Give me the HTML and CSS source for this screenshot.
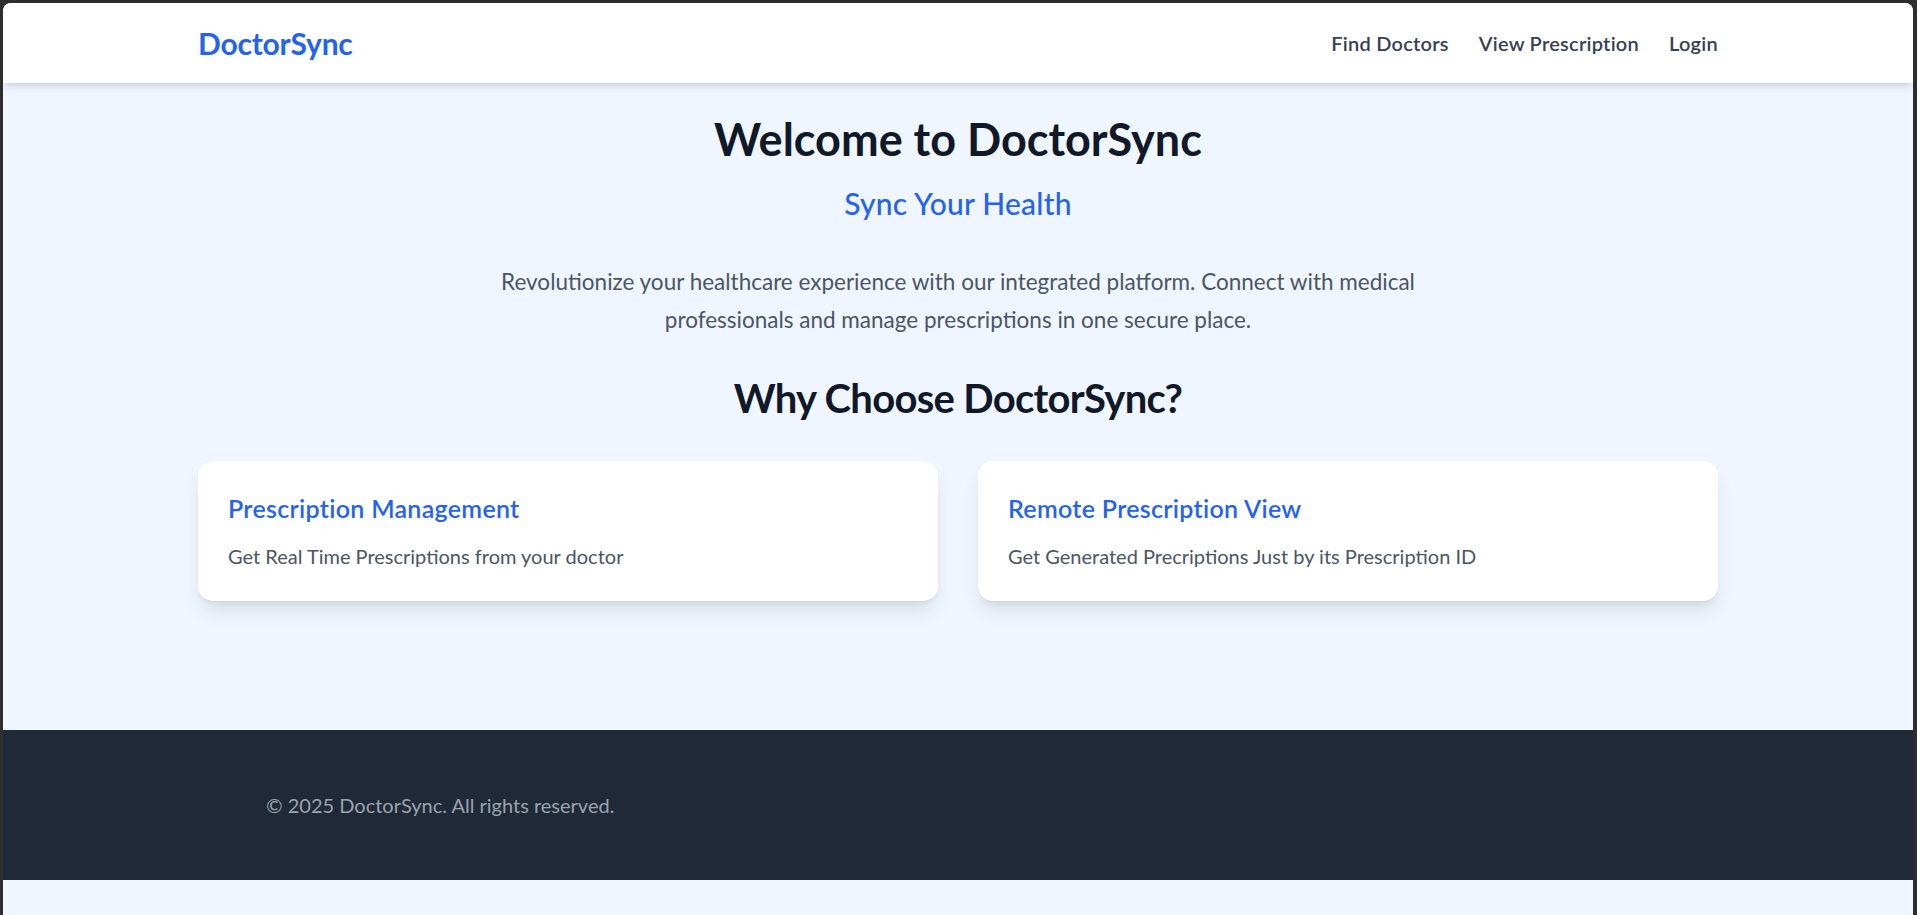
FILE: index.html
```html
<!DOCTYPE html>
<html lang="en">
<head>
<meta charset="utf-8">
<title>DoctorSync</title>
<link rel="stylesheet" href="styles.css">
</head>
<body>
<div class="window">
  <header class="topbar">
    <div class="container topbar-inner">
      <a class="logo" href="#">DoctorSync</a>
      <nav class="nav">
        <a href="#">Find Doctors</a>
        <a href="#">View Prescription</a>
        <a href="#">Login</a>
      </nav>
    </div>
  </header>

  <main class="hero">
    <div class="container">
      <h1 class="hero-title">Welcome to DoctorSync</h1>
      <h2 class="hero-sub">Sync Your Health</h2>
      <p class="hero-text">Revolutionize your healthcare experience with our integrated platform. Connect with medical professionals and manage prescriptions in one secure place.</p>

      <h2 class="section-title">Why Choose DoctorSync?</h2>
      <div class="features">
        <div class="card">
          <h3 class="card-title">Prescription Management</h3>
          <p class="card-text">Get Real Time Prescriptions from your doctor</p>
        </div>
        <div class="card">
          <h3 class="card-title">Remote Prescription View</h3>
          <p class="card-text">Get Generated Precriptions Just by its Prescription ID</p>
        </div>
      </div>
    </div>
  </main>

  <footer class="footer">
    <div class="footer-inner">
      <p class="footer-text">© 2025 DoctorSync. All rights reserved.</p>
    </div>
  </footer>
</div>
</body>
</html>
```

FILE: styles.css
```css
* { box-sizing: border-box; }

html, body {
  margin: 0;
  padding: 0;
}

body {
  background: #2e2e2e;
  font-family: "Lato", "Open Sans", sans-serif;
  min-height: 100vh;
}

.window {
  margin: 3px 4px 0 3px;
  background: #eff6ff;
  border-radius: 8px 8px 0 0;
  overflow: hidden;
  min-height: calc(100vh - 3px);
}

.container {
  max-width: 1520px;
  margin: 0 auto;
}

/* Header */
.topbar {
  background: #ffffff;
  height: 80px;
  box-shadow: 0 5px 7.5px -1.25px rgba(0,0,0,0.1), 0 2.5px 5px -2.5px rgba(0,0,0,0.1);
  position: relative;
  z-index: 1;
}

.topbar-inner {
  height: 80px;
  display: flex;
  align-items: center;
  justify-content: space-between;
}

.logo {
  color: #2563eb;
  font-weight: 700;
  font-size: 30px;
  text-decoration: none;
  letter-spacing: -0.2px;
}

.nav {
  display: flex;
  gap: 30px;
}

.nav a {
  color: #374151;
  font-size: 20px;
  font-weight: 600;
  letter-spacing: 0.25px;
  text-decoration: none;
}

/* Hero */
.hero {
  padding: 31px 0 129px;
  text-align: center;
}

.hero-title {
  margin: 0;
  font-size: 45px;
  line-height: 50px;
  font-weight: 700;
  color: #111827;
}

.hero-sub {
  margin: 19px 0 0;
  font-size: 30px;
  line-height: 40px;
  font-weight: 500;
  letter-spacing: 0.2px;
  color: #2563eb;
}

.hero-text {
  margin: 40px auto 0;
  max-width: 960px;
  font-size: 22.5px;
  line-height: 38px;
  color: #4b5563;
}

.section-title {
  margin: 37px 0 0;
  font-size: 40px;
  line-height: 45px;
  font-weight: 700;
  letter-spacing: -0.7px;
  color: #111827;
}

.features {
  margin-top: 40px;
  display: grid;
  grid-template-columns: 1fr 1fr;
  gap: 40px;
  text-align: left;
}

.card {
  background: #ffffff;
  border-radius: 15px;
  padding: 30px;
  box-shadow: 0 12.5px 19px -3.75px rgba(0,0,0,0.1), 0 5px 7.5px -5px rgba(0,0,0,0.1);
}

.card-title {
  margin: 0 0 15px;
  font-size: 25px;
  line-height: 35px;
  font-weight: 600;
  letter-spacing: 0.3px;
  color: #2563eb;
}

.card-text {
  margin: 0;
  font-size: 20px;
  line-height: 30px;
  color: #4b5563;
}

/* Footer */
.footer {
  background: #1f2937;
  padding: 60px 0;
}

.footer-inner {
  max-width: 1440px;
  margin: 0 auto;
  padding: 0 28px;
}

.footer-text {
  margin: 0;
  font-size: 20px;
  line-height: 30px;
  color: #9ca3af;
}
```
